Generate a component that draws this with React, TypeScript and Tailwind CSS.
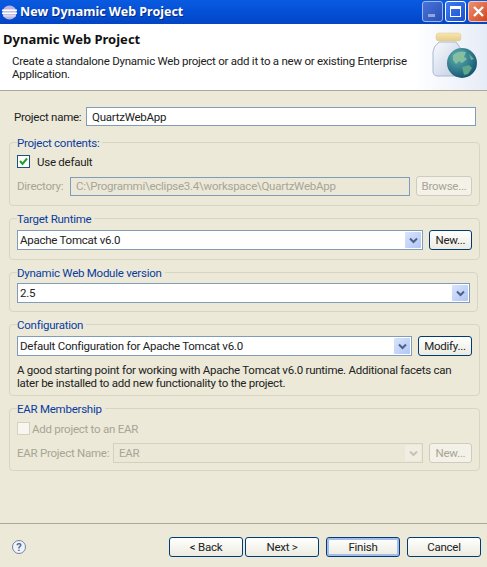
import React from "react";

const FONT = "font-['Roboto','Liberation_Sans',sans-serif]";
const TXT = "text-[11.5px] tracking-[-0.25px] whitespace-nowrap";
const LINE = "leading-none pt-[2px]";

function XPButton({ children, disabled, primary, className = "" }: { children: React.ReactNode; disabled?: boolean; primary?: boolean; className?: string }) {
  const base = disabled
    ? "border-[#cfccbc] text-[#a7a595] bg-[#f3f1e8]"
    : primary
    ? "border-[#003c74] text-[#222] bg-gradient-to-b from-[#ffffff] to-[#ecebe0] shadow-[inset_0_0_0_2px_#a4bcec]"
    : "border-[#003c74] text-[#222] bg-gradient-to-b from-[#ffffff] to-[#ecebe0]";
  return (
    <div className={`flex items-center justify-center border rounded-[3px] ${TXT} ${LINE} ${base} ${className}`}>
      {children}
    </div>
  );
}

function Combo({ value, disabled, className = "" }: { value: string; disabled?: boolean; className?: string }) {
  return (
    <div className={`flex items-center border ${disabled ? "border-[#d4d1c1] bg-[#ebe8d8] text-[#a7a595]" : "border-[#7f9db9] bg-white text-[#222]"} ${className}`}>
      <span className={`flex-1 pl-[2px] ${TXT} ${LINE}`}>{value}</span>
      <div className={`w-[16px] self-stretch m-[1px] flex items-center justify-center rounded-[1px] ${disabled ? "bg-[#f0eee3]" : "bg-gradient-to-br from-[#d9e4fc] to-[#b2c6f5]"}`}>
        <svg width="9" height="7" viewBox="0 0 9 7">
          <path d="M1 1.5 L4.5 5 L8 1.5" fill="none" stroke={disabled ? "#c5c3b6" : "#4d6185"} strokeWidth="2" />
        </svg>
      </div>
    </div>
  );
}

function Group({ title, children, className = "" }: { title: string; children: React.ReactNode; className?: string }) {
  return (
    <fieldset className={`mx-[9px] border border-[#d9d5c5] rounded-[4px] px-[7px] ${className}`}>
      <legend className={`${TXT} leading-[13px] text-[#0a3ca0] pr-[3px]`}>
        <span className="block translate-y-[1px]">{title}</span>
      </legend>
      {children}
    </fieldset>
  );
}

function JarIcon() {
  return (
    <svg width="50" height="50" viewBox="0 0 50 50">
      <defs>
        <linearGradient id="jar" x1="0" y1="0" x2="1" y2="1">
          <stop offset="0" stopColor="#f8fafd" />
          <stop offset="1" stopColor="#c0cce2" />
        </linearGradient>
        <linearGradient id="lid" x1="0" y1="0" x2="0" y2="1">
          <stop offset="0" stopColor="#f8e6b0" />
          <stop offset="1" stopColor="#e6cc88" />
        </linearGradient>
        <radialGradient id="sea" cx="0.35" cy="0.3" r="0.8">
          <stop offset="0" stopColor="#5fb2b4" />
          <stop offset="1" stopColor="#0e4e6c" />
        </radialGradient>
      </defs>
      <path d="M8 11 L25 11 Q31 17 31 24 L31 40 Q31 45 27 45 L7 45 Q2 45 2 40 L2 21 Q2 16 8 11 Z" fill="url(#jar)" stroke="#a9b8d4" strokeWidth="1" />
      <rect x="5" y="2" width="25" height="8" rx="3" fill="url(#lid)" stroke="#dcc88e" strokeWidth="0.5" />
      <circle cx="31" cy="32" r="15" fill="url(#sea)" />
      <path d="M22 24 Q28 19 35 21 L33 26 L36 28 L31 32 L28 30 L25 33 L22 29 Z" fill="#86bfa0" />
      <path d="M31 36 L38 34 L41 37 L37 43 L33 44 Z" fill="#5fa58a" />
      <path d="M38 23 L43 28 L40 29 Z" fill="#6fb094" />
    </svg>
  );
}

export default function App() {
  return (
    <div className={`w-[487px] h-[567px] overflow-hidden flex flex-col bg-[#ece9d8] text-[#222] ${FONT}`}>
      {/* Title bar */}
      <div className="h-[24px] flex items-center bg-gradient-to-b from-[#0a5be0] via-[#0450d6] to-[#0345c4]">
        <svg className="ml-[2px] mr-[3px]" width="15" height="15" viewBox="0 0 15 15">
          <circle cx="7.5" cy="7.5" r="7" fill="#b9b6e4" />
          <rect x="0" y="4.5" width="15" height="1.6" fill="#fff" />
          <rect x="0" y="7.5" width="15" height="1.6" fill="#fff" />
          <rect x="1" y="10.3" width="13" height="1.2" fill="#e6e4f7" />
        </svg>
        <span className="flex-1 font-['Noto_Sans'] text-[12.5px] leading-none font-bold whitespace-nowrap text-white [text-shadow:1px_1px_0_#0a2a80]">New Dynamic Web Project</span>
        <div className="flex items-center gap-[2px] -mr-[2px] pb-[2px]">
          <div className="w-[21px] h-[21px] rounded-[3px] border border-[#9db8ec] bg-gradient-to-br from-[#4a72d8] to-[#2a50b8] flex items-end pl-[5px] pb-[4px]">
            <div className="w-[7px] h-[3px] bg-[#8fa8dc]" />
          </div>
          <div className="w-[21px] h-[21px] rounded-[3px] border border-white bg-gradient-to-br from-[#3f7cf0] to-[#1a50d0] flex items-center justify-center">
            <div className="w-[11px] h-[11px] border border-white border-t-[3px]" />
          </div>
          <div className="w-[21px] h-[21px] rounded-[3px] border border-[#f5c8b8] bg-gradient-to-br from-[#ec9070] to-[#d04018] flex items-center justify-center">
            <svg width="13" height="13" viewBox="0 0 13 13">
              <path d="M2 2 L11 11 M11 2 L2 11" stroke="#fff" strokeWidth="2.4" />
            </svg>
          </div>
        </div>
      </div>

      {/* Header */}
      <div className="h-[67px] flex border-b border-[#aca899] bg-gradient-to-r from-white from-[85%] to-[#e6ecf7]">
        <div className="flex-1 pl-[3px] pt-[7px]">
          <div className="font-['Noto_Sans'] text-[13px] leading-[16px] font-bold whitespace-nowrap text-[#111]">Dynamic Web Project</div>
          <div className={`pl-[9px] pt-[8px] ${TXT} leading-[13px] text-[#222]`}>
            Create a standalone Dynamic Web project or add it to a new or existing Enterprise
            <br />
            Application.
          </div>
        </div>
        <div className="pt-[7px] pr-[6px] pb-[4px]">
          <JarIcon />
        </div>
      </div>

      {/* Project name */}
      <div className="flex items-center pl-[14px] pr-[11px] pt-[16px]">
        <span className={`w-[72px] ${TXT} ${LINE}`}>Project name:</span>
        <div className={`flex-1 h-[19px] flex items-center border border-[#7f9db9] bg-white pl-[5px] ${TXT} ${LINE}`}>QuartzWebApp</div>
      </div>

      {/* Project contents */}
      <Group title="Project contents:" className="mt-[10px] h-[70px]">
        <div className="flex items-center h-[13px] mt-[6px]">
          <div className="w-[13px] h-[13px] border border-[#1c5180] bg-white flex items-center justify-center">
            <svg width="9" height="9" viewBox="0 0 9 9">
              <path d="M1 4 L3.5 7 L8 1.5" fill="none" stroke="#21a121" strokeWidth="2" />
            </svg>
          </div>
          <span className={`ml-[7px] ${TXT} ${LINE}`}>Use default</span>
        </div>
        <div className="flex items-center mt-[8px] h-[20px]">
          <span className={`w-[53px] ${TXT} ${LINE} text-[#a7a595]`}>Directory:</span>
          <div className={`w-[340px] h-[19px] flex items-center border border-[#7f9db9] bg-[#ebe8d8] pl-[5px] ${TXT} ${LINE} text-[#a7a595]`}>
            C:\Programmi\eclipse3.4\workspace\QuartzWebApp
          </div>
          <XPButton disabled className="ml-[6px] w-[56px] h-[20px]">Browse...</XPButton>
        </div>
      </Group>

      {/* Target Runtime */}
      <Group title="Target Runtime" className="mt-[6px] h-[48px]">
        <div className="flex mt-[5px] h-[20px]">
          <Combo value="Apache Tomcat v6.0" className="w-[406px] h-[20px]" />
          <XPButton className="ml-[6px] w-[43px] h-[20px]">New...</XPButton>
        </div>
      </Group>

      {/* Dynamic Web Module version */}
      <Group title="Dynamic Web Module version" className="mt-[6px] h-[46px]">
        <Combo value="2.5" className="mt-[4px] h-[20px]" />
      </Group>

      {/* Configuration */}
      <Group title="Configuration" className="mt-[6px] h-[78px]">
        <div className="flex mt-[5px] h-[20px]">
          <Combo value="Default Configuration for Apache Tomcat v6.0" className="w-[395px] h-[20px]" />
          <XPButton className="ml-[6px] w-[54px] h-[20px]">Modify...</XPButton>
        </div>
        <div className={`mt-[8px] ${TXT} leading-[13px]`}>
          A good starting point for working with Apache Tomcat v6.0 runtime. Additional facets can
          <br />
          later be installed to add new functionality to the project.
        </div>
      </Group>

      {/* EAR Membership */}
      <Group title="EAR Membership" className="mt-[6px] h-[69px]">
        <div className="flex items-center h-[13px] mt-[7px]">
          <div className="w-[13px] h-[13px] border border-[#d4d1c1] bg-[#f7f6f0]" />
          <span className={`ml-[2px] ${TXT} ${LINE} text-[#a7a595]`}>Add project to an EAR</span>
        </div>
        <div className="flex items-center mt-[8px] h-[20px]">
          <span className={`w-[96px] ${TXT} ${LINE} text-[#a7a595]`}>EAR Project Name:</span>
          <Combo value="EAR" disabled className="w-[310px] h-[20px] pl-[3px]" />
          <XPButton disabled className="ml-[6px] w-[43px] h-[20px]">New...</XPButton>
        </div>
      </Group>

      {/* Footer */}
      <div className="mt-[52px] border-t border-[#aca899] flex items-center pt-[13px] pl-[12px] pr-[6px]">
        <div className="w-[14px] h-[14px] rounded-full border border-[#6f84a8] bg-[#f2f3f8] flex items-center justify-center text-[11px] leading-none font-bold text-[#4a6a9a]">?</div>
        <div className="flex-1" />
        <XPButton className="w-[74px] h-[20px]">&lt; Back</XPButton>
        <XPButton className="ml-[2px] w-[74px] h-[20px]">Next &gt;</XPButton>
        <XPButton primary className="ml-[7px] w-[74px] h-[20px]">Finish</XPButton>
        <XPButton className="ml-[7px] w-[74px] h-[20px]">Cancel</XPButton>
      </div>
    </div>
  );
}
